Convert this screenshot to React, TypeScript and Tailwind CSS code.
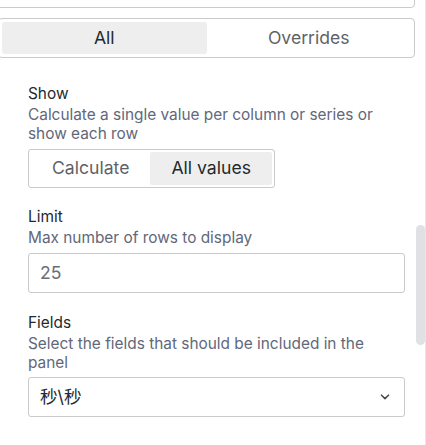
import React from "react";

const font = { fontFamily: 'Inter, "Noto Sans CJK SC", sans-serif' };

function Label({ children }: { children: React.ReactNode }) {
  return <div className="text-[15.4px] leading-[20px] font-normal text-[#24292e]">{children}</div>;
}

function Desc({ children, className = "" }: { children: React.ReactNode; className?: string }) {
  return <div className={"text-[15.4px] leading-[19px] text-[#62677a] " + className}>{children}</div>;
}

export default function App() {
  return (
    <div className="flex h-[445px] w-[426px] overflow-hidden bg-white" style={font}>
      <div className="flex w-[415px] flex-col">
        <div className="-ml-[4px] -mt-[20px] h-[28px] rounded border border-solid border-[#cacaca]" />
        <div className="-ml-[2px] mt-[10px] flex h-[40px] rounded border border-solid border-[#cacaca] p-[3px]">
          <div className="flex flex-1 items-center justify-center rounded-[3px] bg-[#eeeeee] text-[17.6px] text-[#24292e]">
            All
          </div>
          <div className="flex flex-1 items-center justify-center text-[17.6px] text-[#5e6268]">Overrides</div>
        </div>

        <div className="pl-[28px] pr-[10px]">
          <div className="mt-[26px]">
            <Label>Show</Label>
            <Desc className="mt-[1px]">
              Calculate a single value per column or series or
              <br />
              show each row
            </Desc>
            <div className="mt-[6px] inline-flex h-[39px] rounded-[3px] border border-solid border-[#cacaca] p-[2px]">
              <div className="flex items-center px-[21px] text-[17.6px] text-[#5e6268]">Calculate</div>
              <div className="flex items-center rounded-[2px] bg-[#eeeeee] px-[21px] text-[17.6px] text-[#24292e]">
                All values
              </div>
            </div>
          </div>

          <div className="mt-[19px]">
            <Label>Limit</Label>
            <Desc className="mt-[1px]">Max number of rows to display</Desc>
            <div className="mt-[6px] flex h-[40px] items-center rounded-[3px] border border-solid border-[#cacaca] px-[11px] text-[17.6px] text-[#6b6f75]">
              25
            </div>
          </div>

          <div className="mt-[20px]">
            <Label>Fields</Label>
            <Desc className="mt-[1px]">
              Select the fields that should be included in the
              <br />
              panel
            </Desc>
            <div className="mt-[5px] flex h-[40px] items-center justify-between rounded-[3px] border border-solid border-[#cacaca] pl-[11px] pr-[14px] text-[17.6px] text-[#24292e]">
              <span>秒\秒</span>
              <svg width="10" height="6" viewBox="0 0 10 6" fill="none">
                <path d="M1.5 1.2L5 4.6L8.5 1.2" stroke="#464c54" strokeWidth="1.6" strokeLinecap="round" strokeLinejoin="round" />
              </svg>
            </div>
          </div>
        </div>
      </div>
      <div className="flex w-[11px] flex-col border-r border-solid border-[#e6e6e6]">
        <div className="ml-[1px] mt-[225px] h-[120px] w-[9px] rounded-full bg-[#e0e1e4]" />
      </div>
    </div>
  );
}
